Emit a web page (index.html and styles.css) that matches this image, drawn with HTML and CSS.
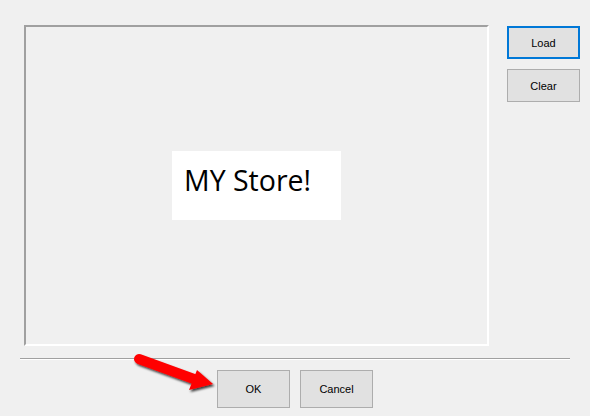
FILE: index.html
```html
<!DOCTYPE html>
<html lang="en">
<head>
    <meta charset="UTF-8">
    <title>Picture Dialog</title>
    <link rel="stylesheet" href="styles.css">
</head>
<body>
    <div class="dialog">
        <!-- 上半部分：图片框 + 右侧按钮 -->
        <div class="top-row">
            <div class="picture-box">
                <div class="picture">MY Store!</div>
            </div>
            <div class="side-buttons">
                <button class="win-button focused">Load</button>
                <button class="win-button">Clear</button>
            </div>
        </div>

        <div class="separator"></div>

        <!-- 底部按钮 -->
        <div class="bottom-row">
            <button class="win-button big">OK</button>
            <button class="win-button big">Cancel</button>
        </div>
    </div>

    <!-- 红色箭头标注 -->
    <svg class="arrow" width="90" height="50" viewBox="0 0 90 50">
        <defs>
            <filter id="shadow" x="-20%" y="-40%" width="140%" height="180%">
                <feDropShadow dx="1.5" dy="2" stdDeviation="1.2" flood-color="#000" flood-opacity="0.75"/>
            </filter>
        </defs>
        <g filter="url(#shadow)">
            <line x1="9" y1="14" x2="64" y2="34" stroke="#ff0000" stroke-width="10" stroke-linecap="round"/>
            <polygon points="67,25 83,39 59,45" fill="#ff0000"/>
        </g>
    </svg>
</body>
</html>
```

FILE: styles.css
```css
body {
    margin: 0;
    background-color: #f0f0f0;
    font-family: "Liberation Sans", Arial, sans-serif;
    width: 590px;
    height: 416px;
    overflow: hidden;
    position: relative;
}

.dialog {
    display: flex;
    flex-direction: column;
    padding-top: 25px;
}

.top-row {
    display: flex;
    align-items: flex-start;
}

.picture-box {
    box-sizing: border-box;
    width: 465px;
    height: 321px;
    margin-left: 24px;
    border-style: solid;
    border-width: 2px;
    border-color: #a0a0a0 #ffffff #ffffff #a0a0a0;
    display: flex;
    align-items: center;
    justify-content: center;
}

.picture {
    box-sizing: border-box;
    width: 169px;
    height: 69px;
    background-color: #ffffff;
    padding: 10px 0 0 12px;
    font-family: "Open Sans", "Noto Sans", sans-serif;
    font-size: 28.5px;
    line-height: 38px;
    color: #000;
}

.side-buttons {
    display: flex;
    flex-direction: column;
    gap: 10px;
    margin-left: 18px;
    margin-top: 1px;
}

.win-button {
    box-sizing: border-box;
    width: 73px;
    height: 33px;
    background-color: #e1e1e1;
    border: 1px solid #adadad;
    border-radius: 0;
    padding: 0;
    font-family: "Liberation Sans", Arial, sans-serif;
    font-size: 11px;
    color: #000;
}

.win-button.focused {
    border: 2px solid #0078d7;
}

.win-button.big {
    height: 38px;
}

.separator {
    margin: 12px 20px 0 20px;
    height: 1px;
    background-color: #a0a0a0;
    border-bottom: 1px solid #ffffff;
}

.bottom-row {
    display: flex;
    gap: 10px;
    margin-top: 10px;
    margin-left: 217px;
}

.arrow {
    position: absolute;
    left: 130px;
    top: 345px;
}
```
